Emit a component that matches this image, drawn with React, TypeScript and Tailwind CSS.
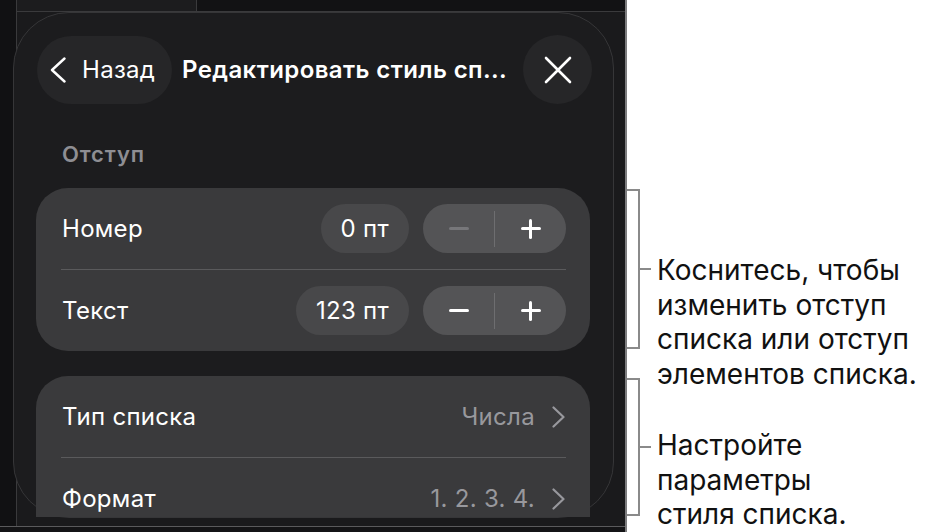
function Chevron({ className }: { className?: string }) {
  return (
    <svg viewBox="0 0 13 22" className={className} fill="none">
      <polyline points="1.5,1.5 11.5,11 1.5,20.5" stroke="currentColor" strokeWidth="2.2" strokeLinecap="round" strokeLinejoin="round" />
    </svg>
  );
}

function Stepper({ minusDisabled }: { minusDisabled?: boolean }) {
  return (
    <div className="flex h-[49px] w-[143px] items-center rounded-full bg-[#545456]">
      <div className="flex flex-1 items-center justify-center">
        <div className={`h-[2.5px] w-[20px] rounded-full ${minusDisabled ? "bg-[#77777a]" : "bg-white"}`} />
      </div>
      <div className="h-[36px] w-px bg-[#6e6e70]" />
      <div className="relative flex flex-1 items-center justify-center">
        <div className="h-[2.5px] w-[20px] rounded-full bg-white" />
        <div className="absolute h-[20px] w-[2.5px] rounded-full bg-white" />
      </div>
    </div>
  );
}

function IndentRow({ label, value, minusDisabled }: { label: string; value: string; minusDisabled?: boolean }) {
  return (
    <div className="flex h-[81px] items-center pl-[26px] pr-[24px]">
      <span className="flex-1 text-[24px] tracking-[0.3px] text-white">{label}</span>
      <div className="flex h-[49px] items-center rounded-full bg-[#48484a] px-[20px] text-[24px] tracking-[0.3px] text-white">
        {value}
      </div>
      <div className="ml-[14px]">
        <Stepper minusDisabled={minusDisabled} />
      </div>
    </div>
  );
}

function LinkRow({ label, value }: { label: string; value: string }) {
  return (
    <div className="flex h-[81px] items-center pl-[26px] pr-[25px]">
      <span className="flex-1 text-[24px] tracking-[0.3px] text-white">{label}</span>
      <span className="text-[24px] tracking-[0.3px] text-[#98989d]">{value}</span>
      <Chevron className="ml-[17px] h-[22px] w-[13px] text-[#98989d]" />
    </div>
  );
}

function Callout({ top, height, lines, textTop }: { top: number; height: number; lines: string[]; textTop: number }) {
  return (
    <div className="absolute left-0 flex" style={{ top }}>
      <div className="relative w-[13px] border-y-2 border-r-2 border-[#8a8a8a]" style={{ height }}>
        <div className="absolute left-[11px] top-1/2 h-[2px] w-[13px] -translate-y-1/2 bg-[#8a8a8a]" />
      </div>
      <div className="ml-[17px] text-[28px] leading-[34.5px] text-[#111]" style={{ marginTop: textTop }}>
        {lines.map((l) => (
          <div key={l} className="whitespace-nowrap">{l}</div>
        ))}
      </div>
    </div>
  );
}

export default function App() {
  return (
    <div className="flex h-[532px] w-[928px] overflow-hidden bg-white" style={{ fontFamily: "Inter, 'Noto Sans', sans-serif" }}>
      {/* device screen */}
      <div className="relative flex h-[532px] w-[627px] shrink-0 flex-col border-r-2 border-[#7c7c7e] bg-[#18181a]">
        <div className="flex h-[12px]">
          <div className="w-[17px] border-r border-[#3a3a3c] bg-[#111113]" />
          <div className="w-[180px] border-b border-r border-[#3a3a3c] bg-[#1c1c1e]" />
          <div className="flex-1 border-b border-[#3a3a3c] bg-[#121214]" />
        </div>
        <div className="flex flex-1">
          <div className="w-[17px] border-r border-[#3a3a3c] bg-[#111113]" />
          <div className="flex-1 bg-[#1a1a1c]" />
        </div>
        <div className="h-[6px] border-t border-[#5a5a5c] bg-[#141416]" />

        {/* popover sheet */}
        <div className="absolute left-[13px] top-[12px] h-[506px] w-[601px] rounded-[56px] border border-[#363638] bg-[#1c1c1e]">
          <div className="flex h-[504px] flex-col overflow-hidden">
            <div className="flex items-center pl-[23px] pr-[21px] pt-[22px]">
              <div className="flex h-[68px] w-[135px] items-center rounded-full bg-[#262628] pl-[13px]">
                <svg viewBox="0 0 16 26" className="h-[26px] w-[16px]" fill="none">
                  <polyline points="14.5,1.5 2,13 14.5,24.5" stroke="white" strokeWidth="2.4" strokeLinecap="round" strokeLinejoin="round" />
                </svg>
                <span className="ml-[16px] text-[24px] tracking-[0.3px] text-white">Назад</span>
              </div>
              <span className="ml-[10px] flex-1 whitespace-nowrap text-[24px] font-semibold tracking-[0.4px] text-white">
                Редактировать стиль сп...
              </span>
              <div className="flex h-[69px] w-[69px] items-center justify-center rounded-full bg-[#262628]">
                <svg viewBox="0 0 28 28" className="h-[28px] w-[28px]" fill="none">
                  <path d="M2 2 L26 26 M26 2 L2 26" stroke="white" strokeWidth="2.6" strokeLinecap="round" />
                </svg>
              </div>
            </div>

            <div className="ml-[48px] mt-[36px] text-[22px] font-semibold leading-[28px] tracking-[0.9px] text-[#8e8e93]">Отступ</div>

            <div className="mx-[22px] mt-[20px] w-[554px] rounded-[32px] bg-[#3a3a3c]">
              <IndentRow label="Номер" value="0 пт" minusDisabled />
              <div className="ml-[25px] mr-[24px] h-px bg-[#5a5a5c]" />
              <IndentRow label="Текст" value="123 пт" />
            </div>

            <div className="mx-[22px] mt-[25px] w-[554px] shrink-0 rounded-t-[32px] bg-[#3a3a3c]">
              <LinkRow label="Тип списка" value="Числа" />
              <div className="ml-[25px] mr-[24px] h-px bg-[#5a5a5c]" />
              <LinkRow label="Формат" value="1. 2. 3. 4." />
            </div>
          </div>
        </div>
      </div>

      {/* annotations */}
      <div className="relative flex-1">
        <Callout
          top={189}
          height={160}
          textTop={64}
          lines={["Коснитесь, чтобы", "изменить отступ", "списка или отступ", "элементов списка."]}
        />
        <Callout top={378} height={138} textTop={50} lines={["Настройте", "параметры", "стиля списка."]} />
      </div>
    </div>
  );
}
